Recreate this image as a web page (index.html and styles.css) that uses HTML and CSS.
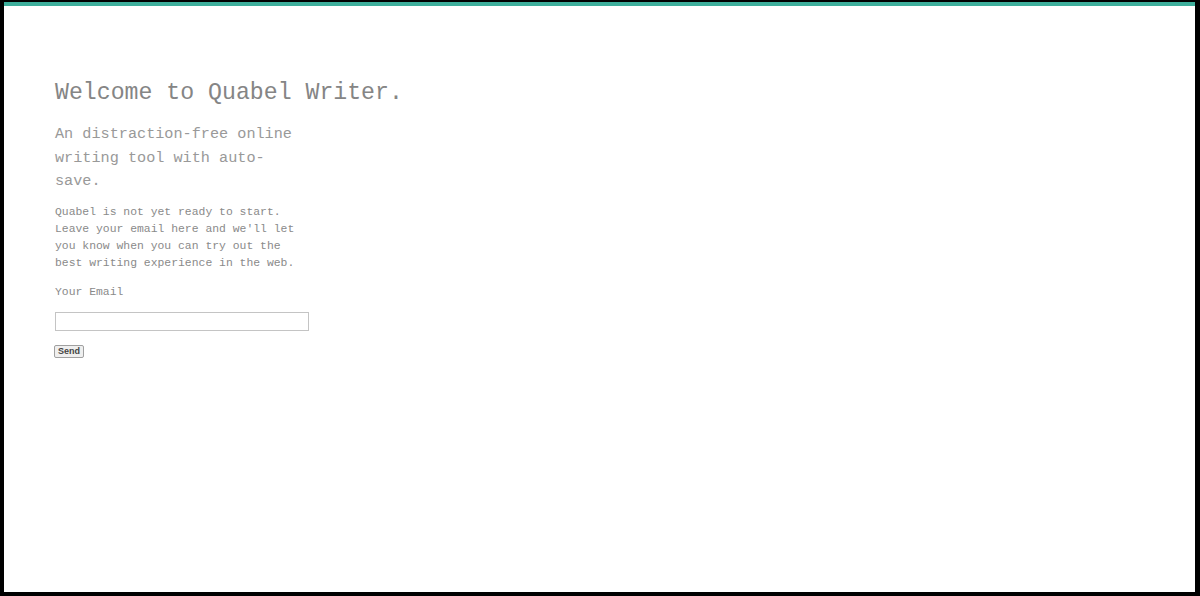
FILE: index.html
```html
<!DOCTYPE html>
<html>
<head>
<meta charset="utf-8">
<link rel="stylesheet" href="styles.css">
</head>
<body>
<div class="frame">
  <div class="accent"></div>
  <main class="content">
    <h1 class="title">Welcome to Quabel Writer.</h1>
    <h2 class="subtitle">An distraction-free online writing tool with auto-save.</h2>
    <p class="intro">Quabel is not yet ready to start. Leave your email here and we'll let you know when you can try out the best writing experience in the web.</p>
    <form class="signup">
      <label class="label" for="email">Your Email</label>
      <input class="email" id="email" type="email">
      <button class="send" type="button">Send</button>
    </form>
  </main>
</div>
</body>
</html>
```
FILE: styles.css
```css
html, body {
  margin: 0;
  padding: 0;
  background: #000;
}
.frame {
  box-sizing: border-box;
  height: 596px;
  width: 1200px;
  border-style: solid;
  border-color: #000;
  border-width: 2px 5px 4px 4px;
  background: #fff;
  display: flex;
  flex-direction: column;
}
.accent {
  height: 4px;
  background: #3dae9b;
}
.content {
  padding: 73px 0 0 51px;
  width: 250px;
  font-family: "Liberation Mono", "Courier New", monospace;
  color: #888;
}
.title {
  margin: 0;
  font-size: 23.2px;
  font-weight: normal;
  line-height: 28px;
  white-space: nowrap;
  color: #858585;
}
.subtitle {
  margin: 16px 0 0;
  font-size: 15.2px;
  font-weight: normal;
  line-height: 23.5px;
  color: #999;
}
.intro {
  margin: 10px 0 0;
  font-size: 11.4px;
  line-height: 17px;
  color: #8a8a8a;
}
.signup {
  margin: 12px 0 0;
  display: flex;
  flex-direction: column;
  align-items: flex-start;
}
.label {
  font-size: 11.4px;
  line-height: 17px;
  color: #8a8a8a;
}
.email {
  box-sizing: border-box;
  margin: 11px 0 0;
  width: 254px;
  height: 19px;
  border: 1px solid #c4c4c4;
  padding: 0 3px;
  background: #fff;
}
.send {
  margin: 14px 0 0 -1px;
  font-family: "Liberation Sans", Arial, sans-serif;
  font-size: 9px;
  font-weight: bold;
  color: #444;
  height: 13px;
  padding: 0 3px;
  line-height: 11px;
  border: 1px solid #a0a0a0;
  border-radius: 2px;
  background: #efefef;
}
```
